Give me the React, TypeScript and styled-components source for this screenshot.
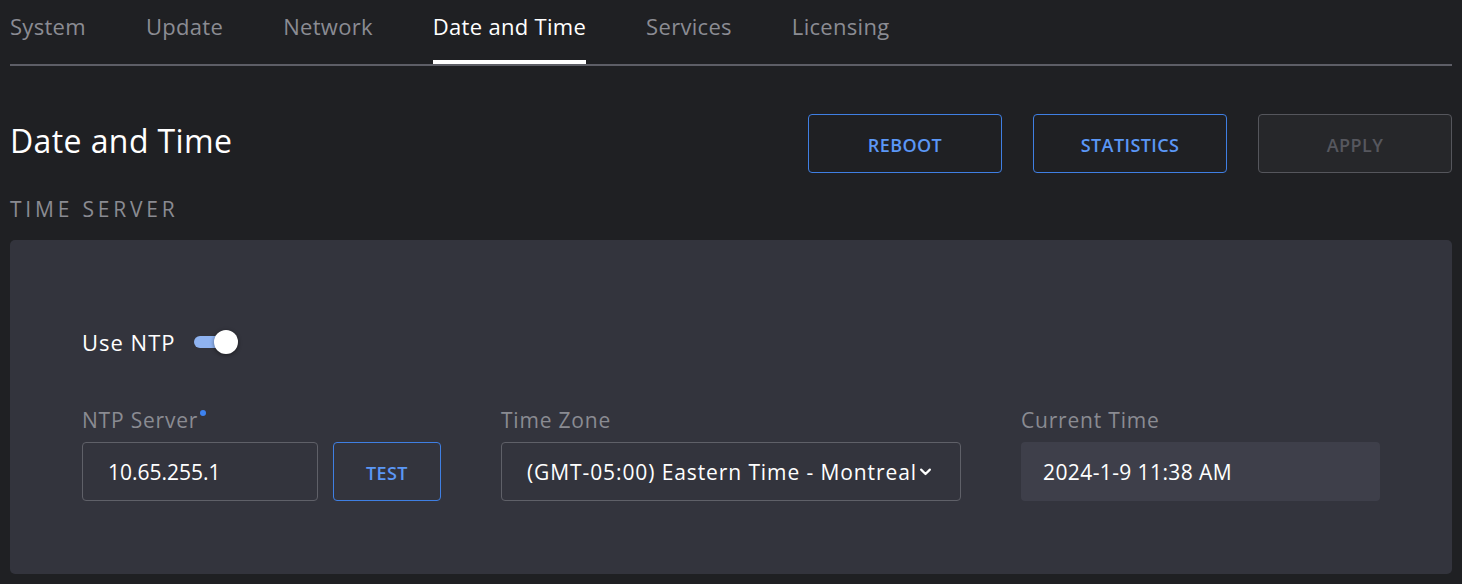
import React, { useState } from 'react';
import styled, { createGlobalStyle, css } from 'styled-components';

const GlobalStyle = createGlobalStyle`
  html, body {
    margin: 0;
    padding: 0;
    background: #1f2023;
  }
  body {
    font-family: 'Open Sans', 'Noto Sans', sans-serif;
    color: #ffffff;
  }
`;

const tabs = ['System', 'Update', 'Network', 'Date and Time', 'Services', 'Licensing'];

const Page = styled.div`
  padding: 0 10px;
  width: 1442px;
`;

const TabBar = styled.nav`
  display: flex;
  gap: 60px;
  border-bottom: 2px solid #5d5e66;
  height: 64px;
`;

const Tab = styled.div<{ $active?: boolean }>`
  font-size: 22px;
  line-height: 22px;
  letter-spacing: 0.3px;
  padding-top: 15px;
  color: #8b8c93;
  height: 64px;
  box-sizing: border-box;
  position: relative;

  ${({ $active }) =>
    $active &&
    css`
      color: #ffffff;
      &::after {
        content: '';
        position: absolute;
        left: 0;
        right: 0;
        bottom: 0;
        height: 4px;
        background: #ffffff;
      }
    `}
`;

const Header = styled.div`
  display: flex;
  align-items: center;
  justify-content: space-between;
  margin-top: 48px;
`;

const Title = styled.h1`
  margin: 0 0 6px;
  font-size: 32px;
  font-weight: 500;
  letter-spacing: 0.4px;
  color: #ffffff;
`;

const Actions = styled.div`
  display: flex;
  gap: 31px;
`;

const OutlineButton = styled.button<{ $width?: number }>`
  width: ${({ $width }) => $width ?? 194}px;
  height: 59px;
  border-radius: 4px;
  border: 1px solid #3f7fe3;
  background: transparent;
  color: #5b97f6;
  font-family: inherit;
  font-size: 18px;
  font-weight: 600;
  letter-spacing: 0.4px;
  text-transform: uppercase;
  cursor: pointer;
  padding: 2px 0 0;

  &:disabled {
    border-color: #55565c;
    background: #26272a;
    color: #56575e;
    cursor: default;
  }
`;

const SectionLabel = styled.h2`
  margin: 22px 0 17px;
  font-size: 21px;
  line-height: 28px;
  font-weight: 500;
  letter-spacing: 3.8px;
  color: #8a8b92;
  text-transform: uppercase;
`;

const Panel = styled.section`
  background: #33343d;
  border-radius: 5px;
  height: 334px;
  box-sizing: border-box;
  padding: 87px 72px 0;
`;

const ToggleRow = styled.label`
  display: flex;
  align-items: center;
  gap: 18px;
  font-size: 22px;
  letter-spacing: 1px;
  color: #ffffff;
  cursor: pointer;
`;

const Track = styled.span<{ $on: boolean }>`
  position: relative;
  width: 42px;
  height: 12px;
  border-radius: 6px;
  background: ${({ $on }) => ($on ? '#8fb3f1' : '#6a6b72')};
`;

const Thumb = styled.span<{ $on: boolean }>`
  position: absolute;
  top: -6px;
  left: ${({ $on }) => ($on ? '20px' : '-2px')};
  width: 24px;
  height: 24px;
  border-radius: 50%;
  background: #ffffff;
  box-shadow: 0 1px 4px rgba(0, 0, 0, 0.45);
`;

const Fields = styled.div`
  display: grid;
  grid-template-columns: 359px 460px 359px;
  gap: 60px;
  margin-top: 52px;
`;

const Field = styled.div`
  display: flex;
  flex-direction: column;
  gap: 11px;
`;

const FieldLabel = styled.span`
  font-size: 21px;
  font-weight: 500;
  letter-spacing: 0.8px;
  color: #8a8b92;
  line-height: 22px;
`;

const Required = styled.span`
  display: inline-block;
  width: 6px;
  height: 6px;
  border-radius: 50%;
  background: #3d82f0;
  vertical-align: top;
  margin: 1px 0 0 2px;
`;

const InputRow = styled.div`
  display: flex;
  gap: 15px;
`;

const boxBase = css`
  height: 59px;
  box-sizing: border-box;
  border-radius: 4px;
  font-family: inherit;
  font-size: 21px;
  color: #ffffff;
  padding: 0 25px;
`;

const TextInput = styled.input`
  ${boxBase};
  width: 236px;
  border: 1px solid #5f6068;
  background: transparent;
  outline: none;
`;

const SelectBox = styled.div`
  ${boxBase};
  display: flex;
  align-items: center;
  border: 1px solid #5f6068;
  padding-right: 24px;
  letter-spacing: 0.9px;
  white-space: nowrap;
  overflow: hidden;

  svg {
    flex: none;
    margin-left: 1px;
  }
`;

const ReadOnlyBox = styled.div`
  ${boxBase};
  display: flex;
  align-items: center;
  background: #3e3f4a;
  padding-left: 22px;
  letter-spacing: 0.4px;
`;

export default function App() {
  const [useNtp, setUseNtp] = useState(true);
  const [server, setServer] = useState('10.65.255.1');

  return (
    <>
      <GlobalStyle />
      <Page>
        <TabBar>
          {tabs.map((t) => (
            <Tab key={t} $active={t === 'Date and Time'}>
              {t}
            </Tab>
          ))}
        </TabBar>

        <Header>
          <Title>Date and Time</Title>
          <Actions>
            <OutlineButton>Reboot</OutlineButton>
            <OutlineButton>Statistics</OutlineButton>
            <OutlineButton disabled>Apply</OutlineButton>
          </Actions>
        </Header>

        <SectionLabel>Time Server</SectionLabel>

        <Panel>
          <ToggleRow onClick={() => setUseNtp(!useNtp)}>
            Use NTP
            <Track $on={useNtp}>
              <Thumb $on={useNtp} />
            </Track>
          </ToggleRow>

          <Fields>
            <Field>
              <FieldLabel>
                NTP Server
                <Required />
              </FieldLabel>
              <InputRow>
                <TextInput value={server} onChange={(e) => setServer(e.target.value)} />
                <OutlineButton $width={108}>Test</OutlineButton>
              </InputRow>
            </Field>

            <Field>
              <FieldLabel>Time Zone</FieldLabel>
              <SelectBox>
                (GMT-05:00) Eastern Time - Montreal
                <svg width="15" height="15" viewBox="0 0 24 24" fill="none" stroke="#ffffff" strokeWidth="3.5" strokeLinecap="round" strokeLinejoin="round">
                  <path d="M5 9l7 7 7-7" />
                </svg>
              </SelectBox>
            </Field>

            <Field>
              <FieldLabel>Current Time</FieldLabel>
              <ReadOnlyBox>2024-1-9 11:38 AM</ReadOnlyBox>
            </Field>
          </Fields>
        </Panel>
      </Page>
    </>
  );
}
